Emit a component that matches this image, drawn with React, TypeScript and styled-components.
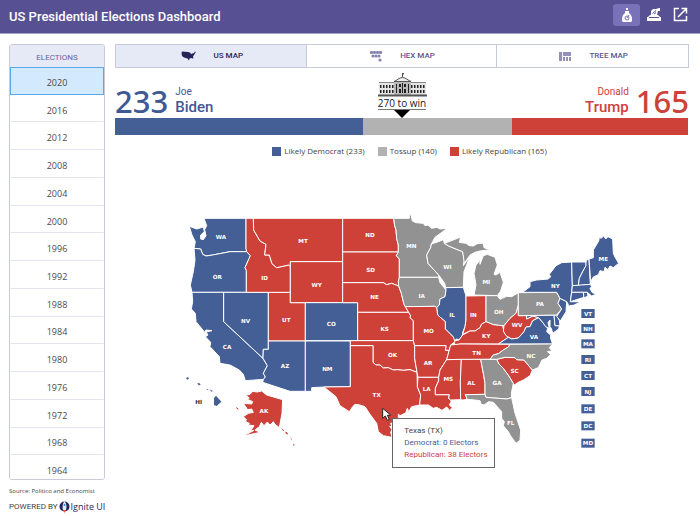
import React from 'react';
import styled, { createGlobalStyle } from 'styled-components';

const BLUE = '#445e96';
const RED = '#cd4139';
const GREY = '#929292';

const GlobalStyle = createGlobalStyle`
  *, *::before, *::after { box-sizing: border-box; }
  body { margin: 0; background: #fff; font-family: "Open Sans", "Noto Sans", sans-serif; color: #444; }
  button { font: inherit; cursor: pointer; }
  #root { min-height: 100vh; display: flex; }
`;

const Page = styled.div`
  flex: 1;
  min-width: 0;
  min-height: 100vh;
  display: flex;
  flex-direction: column;
`;

const Header = styled.header`
  display: flex;
  align-items: center;
  justify-content: space-between;
  height: 34px;
  flex: none;
  padding: 0 6px 0 9px;
  background: #575194;
  border-bottom: 1px solid #a6a2cb;
`;

const Title = styled.h1`
  margin: 0;
  color: #fff;
  font: 500 13px/20px Roboto, sans-serif;
`;

const Actions = styled.div`
  display: flex;
  padding-bottom: 4px;
`;

const IconButton = styled.button<{ $active?: boolean }>`
  display: grid;
  place-items: center;
  width: 27px;
  height: 22px;
  padding: 0;
  border: 0;
  border-radius: 3px;
  color: #fff;
  background: ${(p) => (p.$active ? '#7a72b8' : 'transparent')};
`;

const Body = styled.div`
  flex: 1;
  min-height: 0;
  display: flex;
  gap: 10px;
  padding: 10px 11px 0 9px;
`;

const Side = styled.aside`
  width: 96px;
  flex: none;
  display: flex;
  flex-direction: column;
`;

const YearPanel = styled.section`
  flex: 1;
  display: flex;
  flex-direction: column;
  overflow: hidden;
  border: 1px solid #cacbd8;
  border-radius: 3px;
`;

const SideHeading = styled.h2`
  margin: 0;
  height: 22px;
  background: #e6e9f6;
  color: #69659c;
  font: 400 8px/26px Roboto, sans-serif;
  text-align: center;
`;

const YearList = styled.ul`
  flex: 1;
  display: grid;
  grid-auto-rows: 1fr;
  list-style: none;
  margin: 0 0 -4px;
  padding: 0;
`;

const YearButton = styled.button<{ $active?: boolean }>`
  display: block;
  width: 100%;
  height: 100%;
  padding: 4px 0 0;
  border: 1px solid ${(p) => (p.$active ? '#56a9ec' : 'transparent')};
  border-bottom-color: ${(p) => (p.$active ? '#56a9ec' : '#e2e5f1')};
  background: ${(p) => (p.$active ? '#d3e9fd' : '#fff')};
  color: #4a4a4a;
  font-size: 9px;
  line-height: 12px;
`;

const Source = styled.p`
  margin: 5px 0 0;
  font-size: 6px;
  line-height: 12px;
  white-space: nowrap;
`;

const Powered = styled.footer`
  display: flex;
  align-items: center;
  gap: 2px;
  height: 19px;
  font: 8px/18px Roboto, sans-serif;
  white-space: nowrap;
`;

const Brand = styled.a`
  display: flex;
  align-items: center;
  color: #27245c;
  font: 9px/18px "Open Sans", sans-serif;
  text-decoration: none;
`;

const Main = styled.main`
  flex: 1;
  min-width: 0;
  display: flex;
  flex-direction: column;
`;

const Tabs = styled.div`
  display: grid;
  grid-template-columns: repeat(3, 1fr);
  height: 24px;
  flex: none;
  border: 1px solid #c8cade;
`;

const Tab = styled.button<{ $active?: boolean }>`
  display: flex;
  align-items: center;
  justify-content: center;
  gap: 18px;
  padding: 0 0 0 2px;
  border: 0;
  border-right: 1px solid #c8cade;
  background: ${(p) => (p.$active ? '#e6e9f6' : '#fff')};
  color: ${(p) => (p.$active ? '#27245c' : '#5b5791')};
  font: 500 8px/22px Roboto, sans-serif;
  &:last-child { border-right: 0; }
`;

const Score = styled.section`
  display: grid;
  grid-template-columns: 1fr auto 1fr;
  align-items: end;
  height: 50px;
  flex: none;
`;

const Candidate = styled.div<{ $right?: boolean }>`
  display: flex;
  flex-direction: ${(p) => (p.$right ? 'row-reverse' : 'row')};
  align-items: center;
  gap: 7px;
  height: 34px;
  color: ${(p) => (p.$right ? RED : '#3f5995')};
  text-align: ${(p) => (p.$right ? 'right' : 'left')};
`;

const Votes = styled.strong`
  font: 500 31px/34px "Noto Sans", sans-serif;
`;

const Name = styled.div`
  font: 500 15px/18px Roboto, sans-serif;
  small { display: block; font-weight: 400; font-size: 10px; line-height: 12px; }
`;

const Goal = styled.div`
  display: flex;
  flex-direction: column;
  align-items: center;
  color: #222;
  font-size: 10px;
  line-height: 12px;
  span { border-bottom: 1px solid #777; }
`;

const Bar = styled.div`
  display: flex;
  height: 17px;
  flex: none;
  margin-right: 1px;
`;

const Segment = styled.div<{ $color: string; $votes: number }>`
  flex: ${(p) => p.$votes} 0 0;
  background: ${(p) => p.$color};
`;

const Legend = styled.ul`
  display: flex;
  justify-content: center;
  gap: 13px;
  margin: 9px 0 0;
  padding: 0 0 0 15px;
  list-style: none;
  font-size: 8px;
  line-height: 14px;
  li { display: flex; align-items: center; gap: 3px; }
`;

const Swatch = styled.i<{ $color: string }>`
  width: 9px;
  height: 9px;
  background: ${(p) => p.$color};
`;

const MapArea = styled.section`
  position: relative;
  margin: 7px 1px 0 0;
  svg { display: block; width: 100%; height: auto; }
`;

const StateLabel = styled.text`
  font: 700 17px "DejaVu Sans", sans-serif;
  text-anchor: middle;
`;

const Tooltip = styled.div`
  position: absolute;
  left: 48.4%;
  top: 81.6%;
  width: 103px;
  padding: 6px 11px;
  border: 1px solid #666;
  background: #fff;
  font: 8px/12px Roboto, sans-serif;
  white-space: nowrap;
  p { margin: 0; }
`;

const Party = styled.p<{ $color: string }>`
  color: ${(p) => p.$color};
`;

type Region = [string, string, string, number, number];

const regions: Region[] = [
  ['WA', BLUE, '72,40 198,40 198,130 200,140 150,140 98,150 78,153 68,148 62,132 42,130 46,110 36,90 28,64 50,72 70,66 73,80 62,90 62,102 70,104 78,92 74,74 80,62', 123, 102],
  ['OR', BLUE, '42,130 62,132 68,148 78,153 98,150 150,140 200,140 211,152 195,188 199,196 199,262 36,262 31,240 40,200 45,165', 112, 222],
  ['CA', BLUE, '36,262 131,262 131,350 249,460 262,482 250,505 256,516 252,523 196,527 190,508 178,495 165,488 150,480 120,475 118,455 90,425 92,412 76,395 84,390 78,381 96,377 78,375 74,382 58,362 48,350 46,325 34,312 38,290', 141, 432],
  ['NV', BLUE, '131,262 265,262 265,433 250,433 249,460 131,350', 197, 354],
  ['UT', RED, '265,262 331,262 331,293 376,293 376,408 265,408', 319, 351],
  ['ID', RED, '198,40 220,40 221,75 240,108 258,118 254,150 268,150 276,176 290,188 326,180 331,184 331,262 199,262 199,196 195,188 211,152 200,140 198,130', 254, 225],
  ['MT', RED, '220,40 488,40 488,170 331,170 331,184 326,180 290,188 276,176 268,150 254,150 258,118 240,108 221,75', 369, 115],
  ['WY', RED, '331,170 488,170 488,293 331,293', 410, 245],
  ['CO', BLUE, '376,293 533,293 533,407 376,407', 454, 364],
  ['AZ', BLUE, '265,408 376,408 376,559 330,559 248,532 250,523 256,516 250,505 262,482 249,460 250,433 265,433', 315, 489],
  ['NM', BLUE, '376,408 511,408 511,545 433,546 395,548 395,559 376,559', 442, 498],
  ['ND', RED, '488,40 641,40 644,62 648,75 650,100 655,120 655,141 488,141', 570, 96],
  ['SD', RED, '488,141 655,141 649,152 658,162 658,217 655,230 656,243 635,235 620,239 610,233 488,233', 572, 200],
  ['NE', RED, '488,233 610,233 620,239 635,235 656,243 664,265 672,298 676,305 686,322 533,322 533,293 488,293', 584, 282],
  ['KS', RED, '533,322 686,322 692,332 690,338 700,347 700,407 533,407', 614, 379],
  ['OK', RED, '511,407 700,407 704,422 704,460 711,502 690,494 670,496 652,494 640,495 625,488 610,489 600,480 588,480 579,472 579,422 511,422', 638, 457],
  ['TX', RED, '511,422 579,422 579,472 588,480 600,480 610,489 625,488 640,495 652,494 670,496 690,494 711,502 712,545 722,570 719,600 695,605 686,620 682,610 677,624 660,632 655,627 655,640 645,642 643,653 632,655 636,665 629,664 636,674 632,682 636,697 610,692 595,680 590,655 570,628 555,605 540,600 525,598 518,605 508,620 480,602 468,575 432,546 511,545', 590, 576],
  ['MN', GREY, '641,40 688,40 688,28 693,30 697,48 708,53 730,55 735,62 744,60 755,70 771,67 780,72 802,70 765,97 754,117 752,128 740,150 744,175 776,210 776,217 658,217 658,162 649,152 655,141 655,120 650,100 648,75 644,62', 694, 130],
  ['IA', GREY, '658,217 776,217 780,233 798,255 795,275 780,282 778,300 770,308 765,304 676,305 672,298 664,265 656,243 655,230', 725, 278],
  ['WI', GREY, '754,117 775,110 790,104 793,115 806,123 830,133 848,140 853,165 850,182 857,172 868,158 860,180 852,200 850,247 797,248 794,235 776,210 744,175 740,150 752,128', 802, 193],
  ['MI', GREY, '793,115 825,103 842,96 838,112 858,115 868,122 880,123 892,116 910,115 912,128 930,134 900,138 885,142 870,150 853,175 848,140 830,133 806,123', 0, 0],
  ['MI', GREY, '882,270 888,240 882,205 888,180 900,166 900,178 910,152 922,148 945,157 952,180 942,208 948,210 960,202 970,232 962,258 952,272', 919, 238],
  ['IL', BLUE, '797,248 850,247 858,273 858,345 855,365 848,382 848,390 837,405 830,402 822,408 820,396 796,372 796,350 773,330 770,308 778,300 780,282 795,275 798,255', 816, 336],
  ['IN', RED, '858,273 918,272 918,350 905,357 900,368 885,378 870,378 848,388 855,365 858,345', 880, 335],
  ['OH', GREY, '918,272 952,272 960,283 980,274 995,275 1015,263 1015,300 1008,325 990,340 972,362 955,361 940,359 918,350', 956, 327],
  ['KY', RED, '918,350 940,359 955,361 968,362 972,380 985,397 955,417 840,417 825,421 822,408 837,405 848,390 870,378 885,378 900,368 905,357', 919, 398],
  ['WV', RED, '1015,303 1015,332 1040,332 1040,342 1058,333 1076,338 1058,347 1050,365 1038,366 1032,380 1015,399 995,402 978,392 970,378 972,362 990,340 1008,325', 1011, 366],
  ['VA', BLUE, '955,417 985,397 995,402 1015,399 1032,380 1038,366 1050,365 1058,347 1076,338 1088,352 1103,370 1100,380 1112,390 1112,401 1118,417', 1062, 402],
  ['MD', BLUE, '1040,332 1122,330 1125,362 1138,362 1136,372 1118,385 1114,370 1110,365 1110,345 1104,353 1108,370 1097,365 1088,352 1076,338 1058,333 1040,342', 0, 0],
  ['DE', BLUE, '1122,330 1130,330 1138,346 1140,362 1125,362', 0, 0],
  ['PA', GREY, '1015,263 1130,262 1140,280 1134,295 1145,312 1130,330 1015,332', 1080, 303],
  ['NJ', BLUE, '1140,280 1160,290 1158,320 1141,348 1130,334 1145,312 1134,295', 0, 0],
  ['NY', BLUE, '1028,262 1050,245 1050,230 1070,225 1105,222 1112,215 1108,208 1128,182 1145,173 1175,171 1177,242 1175,262 1171,290 1195,291 1168,303 1160,290 1140,280 1130,262', 1126, 249],
  ['VT', BLUE, '1175,171 1218,171 1218,182 1208,200 1198,220 1195,242 1177,242', 0, 0],
  ['NH', BLUE, '1218,171 1222,162 1227,165 1230,222 1231,238 1195,242 1198,220 1208,200 1218,182', 0, 0],
  ['MA', BLUE, '1177,242 1231,238 1235,245 1230,250 1236,262 1248,268 1235,273 1222,262 1175,262', 0, 0],
  ['CT', BLUE, '1175,262 1210,262 1212,277 1171,290', 0, 0],
  ['RI', BLUE, '1210,262 1222,262 1224,273 1212,279', 0, 0],
  ['ME', BLUE, '1227,162 1240,158 1240,135 1256,108 1258,97 1264,100 1271,92 1277,102 1284,95 1298,102 1300,145 1306,158 1316,175 1300,188 1290,183 1284,194 1275,187 1272,200 1260,197 1255,209 1240,216 1232,230', 1270, 168],
  ['MO', RED, '676,305 765,304 770,308 773,330 796,350 796,372 820,396 825,410 812,420 808,436 796,436 798,422 704,422 700,407 700,347 690,338 692,332 686,322', 746, 385],
  ['AR', RED, '704,422 798,422 796,436 808,436 800,464 780,495 776,517 714,517 711,502 704,460', 744, 479],
  ['LA', RED, '714,517 776,517 776,527 766,550 766,569 808,569 806,580 814,588 808,600 822,612 814,610 810,617 800,606 786,616 770,607 760,610 745,600 719,600 722,570 712,545', 740, 557],
  ['TN', RED, '812,420 840,417 990,418 985,426 970,435 955,446 940,450 930,463 800,464', 890, 450],
  ['MS', RED, '800,464 844,463 841,530 842,584 812,585 806,580 808,569 766,569 766,550 776,527 776,517 780,495', 805, 528],
  ['AL', RED, '844,463 902,463 911,510 915,535 915,568 856,569 862,583 848,585 842,584 841,530', 874, 539],
  ['GA', GREY, '902,463 950,463 958,478 970,490 985,510 1000,535 994,565 995,578 980,582 918,577 915,568 915,535 911,510', 951, 539],
  ['FL', GREY, '856,569 915,568 918,577 980,582 995,578 1005,625 1022,675 1020,706 1008,715 990,690 985,680 970,662 973,650 965,640 965,620 940,592 926,590 912,600 904,598 900,587 884,585 862,583', 992, 660],
  ['SC', RED, '950,463 975,457 1005,458 1010,464 1032,465 1057,495 1050,512 1030,525 1015,532 1003,540 1000,535 985,510 970,490 958,478', 1004, 504],
  ['NC', GREY, '990,418 1118,417 1108,428 1116,438 1102,440 1112,448 1100,460 1086,465 1075,488 1057,495 1032,465 1010,464 1005,458 975,457 950,463 930,463 940,450 955,446 970,435 985,426', 1053, 459],
  ['AK', RED, '245,558 260,570 308,584 306,625 298,668 285,658 280,650 270,660 262,651 252,662 244,652 238,665 225,675 240,682 190,693 222,676 212,678 222,662 205,660 208,655 193,648 200,645 190,635 205,625 220,622 215,612 203,614 190,595 215,597 218,590 200,582 208,579 197,571 210,568 218,559 232,561', 252, 623],
];

const islands: [string, string][] = [
  [BLUE, '102,578 108,572 124,590 110,603 102,600'],
  [BLUE, '18,519 24,516 27,521 22,524'],
  [BLUE, '52,535 58,534 62,540 56,541'],
  [BLUE, '78,552 84,552 84,555'],
  [BLUE, '88,553 98,557 96,561'],
  [RED, '167,606 173,609 177,614 171,612'],
  [RED, '304,670 312,675 310,679'],
  [RED, '315,680 321,682 325,689 318,686'],
  [RED, '331,695 337,706 333,702'],
  [RED, '338,716 345,720 341,722'],
];

const badges: [string, number][] = [
  ['VT', 325], ['NH', 370], ['MA', 416], ['RI', 463], ['CT', 511], ['NJ', 559], ['DE', 611], ['DC', 662], ['MD', 714],
];

const years = [2020, 2016, 2012, 2008, 2004, 2000, 1996, 1992, 1988, 1984, 1980, 1976, 1972, 1968, 1964];

const groups: [string, number, string][] = [
  ['Likely Democrat', 233, BLUE],
  ['Tossup', 140, '#b2b2b2'],
  ['Likely Republican', 165, RED],
];

function ElectionMap() {
  return (
    <svg viewBox="-195 -120 1719 930" role="img" aria-label="Electoral map of the United States">
      <g stroke="#fff" strokeWidth="3" strokeLinejoin="round">
        {regions.map(([id, fill, points], i) => <polygon key={id + i} fill={fill} points={points} />)}
      </g>
      {islands.map(([fill, points]) => <polygon key={points} fill={fill} points={points} />)}
      <path d="M1163 301l14-8 20-2-16 8z" fill={BLUE} />
      <g fill="#fff">
        {regions.filter((r) => r[3] > 0).map(([id, , , x, y]) => <StateLabel key={id} x={x} y={y}>{id}</StateLabel>)}
      </g>
      <StateLabel x="56" y="598" fill="#333">HI</StateLabel>
      {badges.map(([id, y]) => (
        <g key={id}>
          <rect x="1204" y={y - 13} width="40" height="27" fill={BLUE} />
          <StateLabel x="1224" y={y + 7} fill="#fff">{id}</StateLabel>
        </g>
      ))}
      <path d="M608 610v30l8-7 6 13 6-3-6-12 10-1z" fill="#fff" stroke="#222" strokeWidth="3" />
    </svg>
  );
}

function FlaskIcon() {
  return (
    <svg width="12" height="16" viewBox="0 0 12 16" fill="currentColor">
      <path d="M5 1h2v2H5zM4 4h4v2l2 2 1 3v3l-1 1H2l-1-1v-3l1-3 2-2z" />
      <circle cx="6" cy="11" r="2" fill="none" stroke="#7a72b8" />
      <path d="M6 11l2-3" stroke="#7a72b8" />
    </svg>
  );
}

function StampIcon() {
  return (
    <svg width="16" height="15" viewBox="0 0 16 15" fill="currentColor">
      <path d="M1 10h14v4H1zM4 8h8l2 2H2zM5 7V4l2-2h3l3-1h1v3h-2l-1 4H5z" />
      <path d="M3 10.500h10M6.500 6.500l3.500-3M8 7l2-1.500" stroke="#575194" />
    </svg>
  );
}

function OpenIcon() {
  return (
    <svg width="15" height="15" viewBox="0 0 15 15" fill="none" stroke="currentColor" strokeWidth="1.500">
      <path d="M6 1.500H1.500v12h12V9M8.500 1.500h5V6.500M13.500 1.500L5 10" />
    </svg>
  );
}

function UsIcon() {
  return (
    <svg width="15" height="10" viewBox="0 0 15 10" fill="currentColor">
      <path d="M1 .5l6 .5 2 .5 1 1.500L13 2l1-1.500.8.5-1.800 3-1 1.500.5 2h-1L11 7 8.500 7.500l-.5 2L6.500 7.500 3 6.500 1 5 .5 2z" />
    </svg>
  );
}

function HexIcon() {
  const dots = [[1.5, 1.5], [4.5, 1.5], [7.5, 1.5], [10.5, 1.5], [3, 5], [6, 5], [9, 5], [10, 9]];
  return (
    <svg width="12" height="11" viewBox="0 0 12 11" fill="#8583b0">
      {dots.map(([x, y]) => <circle key={`${x} ${y}`} cx={x} cy={y} r="1.600" />)}
    </svg>
  );
}

function TreeIcon() {
  return (
    <svg width="12" height="9" viewBox="0 0 12 9" fill="#9290b8" shapeRendering="crispEdges">
      <path d="M0 0h3v9H0zM4 0h8v4H4zM4 5h2v4H4zM7 5h2v4H7zM10 5h2v4h-2z" />
    </svg>
  );
}

function WhiteHouse() {
  const bays = [2, 5, 8, 11, 14, 33, 36, 39, 42, 45];
  return (
    <svg width="49" height="24" viewBox="0 0 49 24">
      <path d="M1 9h15v13H1zM33 9h15v13H33z" fill="#e4e4e4" />
      <path d="M1 9.500h15M33 9.500h15" stroke="#888" />
      <path d="M16 9h17v13H16z" fill="#bbb" />
      <path d="M16 8.500c3-1 5-4 8.500-4s5.500 3 8.500 4z" fill="#eee" stroke="#555" />
      <g fill="#222">
        {bays.map((x) => <path key={x} d={`M${x} 12h1.500v3H${x}zM${x} 17h1.500v3H${x}z`} />)}
        <path d="M18 11h1v9h-1zM21 11h2v3h-2zM21 16h2v4h-2zM24 10h1v10h-1zM26 11h2v3h-2zM26 16h2v4h-2zM30 11h1v9h-1z" />
      </g>
      <path d="M0 22.500h49" stroke="#555" strokeWidth="2" />
      <path d="M24.500 0v4" stroke="#555" />
      <path d="M24 0h2v1.500h-2z" fill="#555" />
    </svg>
  );
}

function Rocket() {
  return (
    <svg width="11" height="12" viewBox="0 0 11 12">
      <circle cx="5.500" cy="5.500" r="5" fill="#25235f" />
      <path d="M5.500 0C3 3 3.500 7 4 9h3c.8-3 .8-6-1.500-9z" fill="#d9eefb" />
      <circle cx="5.500" cy="4" r="1" fill="#268bd0" />
      <path d="M4 9h3l-1.500 3z" fill="#f05a28" />
    </svg>
  );
}

export default function App() {
  return (
    <>
      <GlobalStyle />
      <Page>
        <Header>
          <Title>US Presidential Elections Dashboard</Title>
          <Actions>
            <IconButton $active aria-label="Electors"><FlaskIcon /></IconButton>
            <IconButton aria-label="Votes"><StampIcon /></IconButton>
            <IconButton aria-label="Open in new window"><OpenIcon /></IconButton>
          </Actions>
        </Header>
        <Body>
          <Side>
            <YearPanel>
              <SideHeading>ELECTIONS</SideHeading>
              <YearList>
                {years.map((y) => <li key={y}><YearButton $active={y === 2020}>{y}</YearButton></li>)}
              </YearList>
            </YearPanel>
            <Source>Source: Politico and Economist</Source>
            <Powered>POWERED BY <Brand href="#ignite"><Rocket />Ignite UI</Brand></Powered>
          </Side>
          <Main>
            <Tabs>
              <Tab $active><UsIcon />US MAP</Tab>
              <Tab><HexIcon />HEX MAP</Tab>
              <Tab><TreeIcon />TREE MAP</Tab>
            </Tabs>
            <Score>
              <Candidate><Votes>233</Votes><Name><small>Joe</small>Biden</Name></Candidate>
              <Goal>
                <WhiteHouse />
                <span>270 to win</span>
                <svg width="16" height="8" viewBox="0 0 16 8"><path d="M0 0h16L8 8z" /></svg>
              </Goal>
              <Candidate $right><Votes>165</Votes><Name><small>Donald</small>Trump</Name></Candidate>
            </Score>
            <Bar>
              {groups.map(([name, votes, color]) => <Segment key={name} $votes={votes} $color={color} />)}
            </Bar>
            <Legend>
              {groups.map(([name, votes, color]) => <li key={name}><Swatch $color={color} />{name} ({votes})</li>)}
            </Legend>
            <MapArea>
              <ElectionMap />
              <Tooltip role="tooltip">
                <p>Texas (TX)</p>
                <Party $color={BLUE}>Democrat: 0 Electors</Party>
                <Party $color={RED}>Republican: 38 Electors</Party>
              </Tooltip>
            </MapArea>
          </Main>
        </Body>
      </Page>
    </>
  );
}
